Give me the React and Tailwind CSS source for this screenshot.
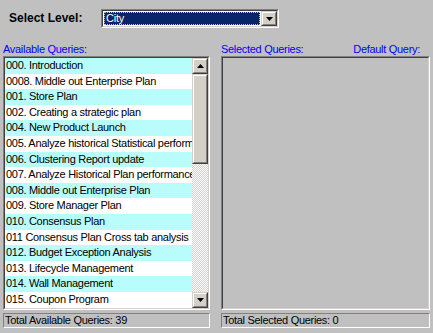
import React from "react";

const items = [
  "000. Introduction",
  "0008. Middle out Enterprise Plan",
  "001. Store Plan",
  "002. Creating a strategic plan",
  "004. New Product Launch",
  "005. Analyze historical Statistical performance",
  "006. Clustering Report update",
  "007. Analyze Historical Plan performance",
  "008. Middle out Enterprise Plan",
  "009. Store Manager Plan",
  "010. Consensus Plan",
  "011 Consensus Plan Cross tab analysis",
  "012. Budget Exception Analysis",
  "013. Lifecycle Management",
  "014. Wall Management",
  "015. Coupon Program",
];

function Sunken({ className = "", innerClass = "", children }) {
  return (
    <div className={`border border-t-[#808080] border-l-[#808080] border-b-white border-r-white ${className}`}>
      <div className={`h-full w-full border border-t-[#404040] border-l-[#404040] border-b-[#d4d0c8] border-r-[#d4d0c8] ${innerClass}`}>
        {children}
      </div>
    </div>
  );
}

function Raised({ className = "", children }) {
  return (
    <div className={`border border-t-[#d4d0c8] border-l-[#d4d0c8] border-b-[#404040] border-r-[#404040] ${className}`}>
      <div className="h-full w-full border border-t-white border-l-white border-b-[#808080] border-r-[#808080] bg-[#d4d0c8] flex items-center justify-center">
        {children}
      </div>
    </div>
  );
}

function Arrow({ up }) {
  return (
    <svg width="7" height="4" viewBox="0 0 7 4" className="block">
      {up ? (
        <path d="M3.5 0 L7 4 L0 4 Z" fill="#000" />
      ) : (
        <path d="M0 0 L7 0 L3.5 4 Z" fill="#000" />
      )}
    </svg>
  );
}

export default function App() {
  return (
    <div
      className="w-[433px] h-[333px] bg-[#c0c0c0] overflow-hidden text-black"
      style={{ fontFamily: '"Liberation Sans", Arial, sans-serif' }}
    >
      <div className="flex items-center h-[19px] mt-[9px]">
        <span className="ml-[9px] w-[92px] font-bold text-[12px] leading-[19px]">Select Level:</span>
        <Sunken className="w-[178px] h-[19px]" innerClass="flex bg-white">
          <div className="flex-1 p-[1px]">
            <div className="h-full bg-[#0a246a] border border-dotted border-[#c0c0c0] text-white text-[11px] leading-[11px] pl-[1px] tracking-[-0.2px]">
              City
            </div>
          </div>
          <Raised className="w-[16px] h-full">
            <Arrow />
          </Raised>
        </Sunken>
      </div>

      <div className="flex mt-[14px] text-[11px] tracking-[-0.3px]">
        <div className="ml-[3px] w-[207px] flex flex-col">
          <div className="h-[14px] leading-[14px] text-[#0000ff]">Available Queries:</div>
          <Sunken className="h-[254px]" innerClass="flex bg-white">
            <div className="flex-1 overflow-hidden">
              {items.map((t, i) => (
                <div
                  key={i}
                  className={`h-[15.6px] leading-[15.6px] whitespace-nowrap pl-[1px] ${i % 2 === 0 ? "bg-[#b8fcfc]" : "bg-white"}`}
                >
                  {t}
                </div>
              ))}
            </div>
            <div className="w-[16px] flex flex-col">
              <Raised className="h-[16px]">
                <Arrow up />
              </Raised>
              <div className="flex-1 flex flex-col bg-[repeating-conic-gradient(#d4d0c8_0_25%,#ffffff_0_50%)] bg-[length:2px_2px]">
                <Raised className="h-[90px]" />
              </div>
              <Raised className="h-[16px]">
                <Arrow />
              </Raised>
            </div>
          </Sunken>
          <div className="mt-[3px] h-[15px] leading-[13px] border border-t-[#808080] border-l-[#808080] border-b-white border-r-white pl-[1px]">
            Total Available Queries: 39
          </div>
        </div>

        <div className="ml-[11px] w-[209px] flex flex-col">
          <div className="h-[14px] leading-[14px] text-[#0000ff] flex justify-between pr-[10px]">
            <span>Selected Queries:</span>
            <span>Default Query:</span>
          </div>
          <Sunken className="h-[254px]" innerClass="bg-[#c0c0c0]" />
          <div className="mt-[3px] h-[15px] leading-[13px] border border-t-[#808080] border-l-[#808080] border-b-white border-r-white pl-[1px]">
            Total Selected Queries: 0
          </div>
        </div>
      </div>
    </div>
  );
}
